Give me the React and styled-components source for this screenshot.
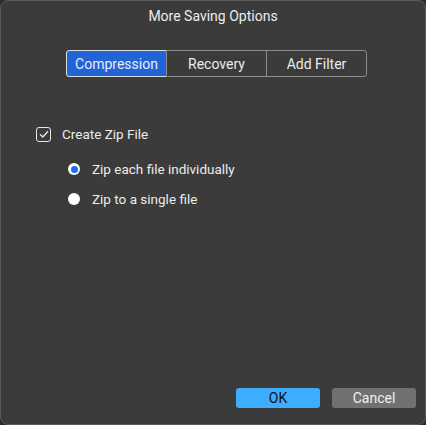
import React, { useState } from "react";
import styled, { createGlobalStyle } from "styled-components";

const Global = createGlobalStyle`
  html, body {
    margin: 0;
    padding: 0;
    background: #2b2b2b;
  }
  * { box-sizing: border-box; }
`;

const Dialog = styled.div`
  width: 426px;
  height: 425px;
  background: #3b3b3b;
  border: 1px solid #5a5a5a;
  border-radius: 8px;
  display: flex;
  flex-direction: column;
  font-family: Roboto, "Liberation Sans", sans-serif;
  color: #ececec;
  font-size: 13.5px;
`;

const Title = styled.div`
  text-align: center;
  padding-top: 7px;
  height: 30px;
  font-size: 14px;
`;

const Tabs = styled.div`
  display: flex;
  margin: 19px 0 0 65px;
`;

const Tab = styled.button`
  width: 101px;
  height: 27px;
  font-family: inherit;
  font-size: 14px;
  color: ${(p) => (p.$active ? "#e8ecf6" : "#ececec")};
  background: ${(p) => (p.$active ? "#2264d8" : "transparent")};
  border: 1px solid ${(p) => (p.$active ? "#e0e0e0" : "#8c8c8c")};
  margin-left: -1px;
  padding: 0;
  cursor: pointer;
  &:first-child {
    border-radius: 3px 0 0 3px;
    margin-left: 0;
  }
  &:last-child {
    border-radius: 0 3px 3px 0;
  }
`;

const Body = styled.div`
  flex: 1;
  padding: 49px 0 0 35px;
  display: flex;
  flex-direction: column;
`;

const CheckRow = styled.label`
  display: flex;
  align-items: center;
  gap: 11px;
  height: 16px;
`;

const Box = styled.span`
  width: 15px;
  height: 15px;
  border: 1.5px solid #e6e6e6;
  border-radius: 3px;
  display: flex;
  align-items: center;
  justify-content: center;
`;

const Options = styled.div`
  display: flex;
  flex-direction: column;
  gap: 16px;
  padding-left: 32px;
  margin-top: 20px;
`;

const RadioRow = styled.label`
  display: flex;
  align-items: center;
  gap: 12px;
  height: 14px;
`;

const Dot = styled.span`
  width: 12px;
  height: 12px;
  border-radius: 50%;
  background: #ffffff;
  display: flex;
  align-items: center;
  justify-content: center;
  &::after {
    content: "";
    width: 7px;
    height: 7px;
    border-radius: 50%;
    background: ${(p) => (p.$on ? "#1a6fe8" : "transparent")};
  }
`;

const Footer = styled.div`
  display: flex;
  justify-content: flex-end;
  gap: 12px;
  padding: 0 9px 16px 0;
`;

const Btn = styled.button`
  width: 84px;
  height: 20px;
  border: none;
  border-radius: 3px;
  font-family: inherit;
  font-size: 14px;
  padding: 0;
  background: ${(p) => (p.$primary ? "#3daeff" : "#717171")};
  color: ${(p) => (p.$primary ? "#111111" : "#f0f0f0")};
`;

export default function App() {
  const [tab, setTab] = useState("Compression");
  const [mode, setMode] = useState(0);
  return (
    <>
      <Global />
      <Dialog>
        <Title>More Saving Options</Title>
        <Tabs>
          {["Compression", "Recovery", "Add Filter"].map((t) => (
            <Tab key={t} $active={tab === t} onClick={() => setTab(t)}>
              {t}
            </Tab>
          ))}
        </Tabs>
        <Body>
          <CheckRow>
            <Box>
              <svg width="10" height="8" viewBox="0 0 10 8">
                <path d="M1 4.2 L3.8 7 L9 1.2" fill="none" stroke="#e6e6e6" strokeWidth="1.4" />
              </svg>
            </Box>
            Create Zip File
          </CheckRow>
          <Options>
            {["Zip each file individually", "Zip to a single file"].map((o, i) => (
              <RadioRow key={o} onClick={() => setMode(i)}>
                <Dot $on={mode === i} />
                {o}
              </RadioRow>
            ))}
          </Options>
        </Body>
        <Footer>
          <Btn $primary>OK</Btn>
          <Btn>Cancel</Btn>
        </Footer>
      </Dialog>
    </>
  );
}
